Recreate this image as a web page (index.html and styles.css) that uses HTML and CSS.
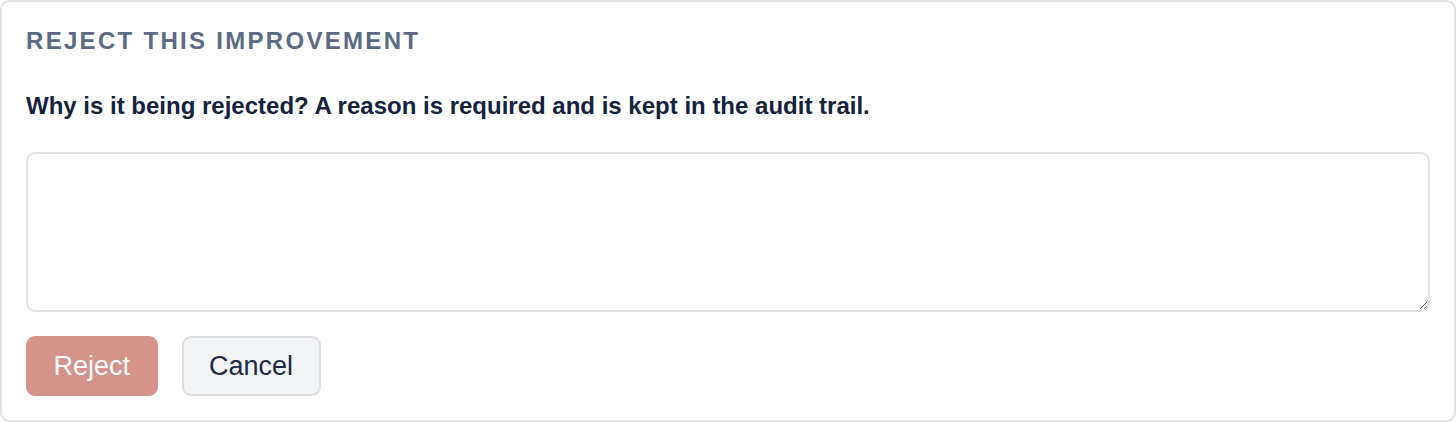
FILE: index.html
```html
<!DOCTYPE html>
<html lang="en">
<head>
<meta charset="utf-8">
<title>Reject this improvement</title>
<link rel="stylesheet" href="styles.css">
</head>
<body>
<section class="card">
  <h2 class="card-title">Reject this improvement</h2>
  <label class="reason-label" for="reason">Why is it being rejected? A reason is required and is kept in the audit trail.</label>
  <textarea id="reason" class="reason-input"></textarea>
  <div class="actions">
    <button class="btn btn-reject" type="button" disabled>Reject</button>
    <button class="btn btn-cancel" type="button">Cancel</button>
  </div>
</section>
</body>
</html>
```

FILE: styles.css
```css
* { box-sizing: border-box; }
html, body {
  margin: 0;
  padding: 0;
  background: #ffffff;
}
body {
  font-family: "Liberation Sans", Arial, sans-serif;
  width: 1456px;
  height: 422px;
}
.card {
  height: 422px;
  border: 2px solid #e3e4e8;
  border-radius: 9px;
  padding: 24px;
  display: flex;
  flex-direction: column;
}
.card-title {
  margin: 0;
  font-size: 24px;
  line-height: 30px;
  font-weight: 700;
  letter-spacing: 2.3px;
  text-transform: uppercase;
  color: #5b6a85;
}
.reason-label {
  margin-top: 36px;
  font-size: 24px;
  line-height: 28px;
  font-weight: 700;
  color: #14223d;
}
.reason-input {
  margin-top: 32px;
  height: 160px;
  flex: none;
  width: 100%;
  border: 2px solid #dfe0e4;
  border-radius: 9px;
  padding: 10px 12px;
  font-family: inherit;
  font-size: 24px;
  resize: vertical;
  background: #fff;
}
.actions {
  margin-top: 24px;
  display: flex;
  gap: 24px;
}
.btn {
  font-family: "Liberation Sans", Arial, sans-serif;
  font-size: 27px;
  line-height: 32px;
  height: 60px;
  padding: 0 25.5px;
  border-radius: 9px;
  border: 2px solid transparent;
}
.btn-reject {
  background: #d6938b;
  color: #ffffff;
}
.btn-cancel {
  background: #f3f4f6;
  border-color: #dcdee3;
  color: #1b2946;
}
```
